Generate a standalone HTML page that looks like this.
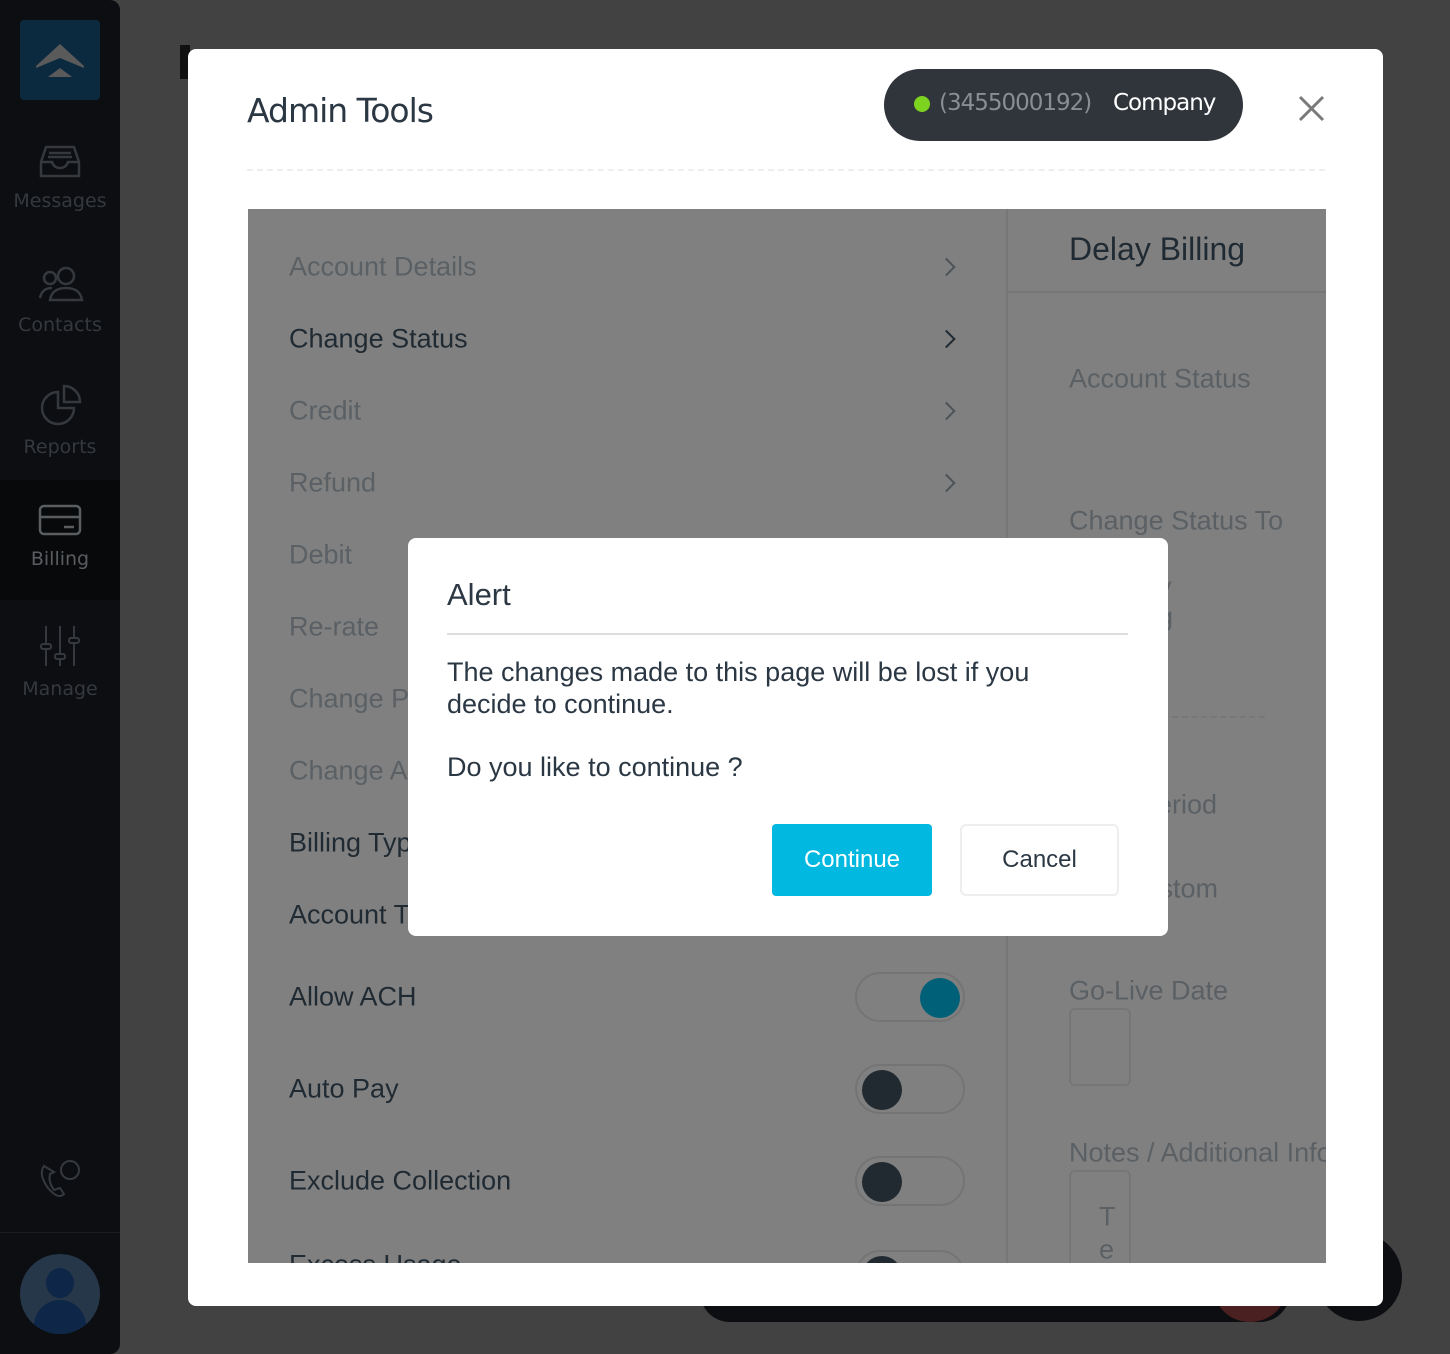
<!DOCTYPE html>
<html><head><style>
*{margin:0;padding:0;box-sizing:border-box}
body{width:1450px;height:1354px;background:#424242;position:relative;overflow:hidden;font-family:"Liberation Sans",Arial,sans-serif}
.abs{position:absolute}
.side{left:0;top:0;width:120px;height:1354px;background:#0c0e11;border-radius:0 10px 10px 0}
.nav{left:0;width:120px;text-align:center;color:#35393e;font-size:19px;font-family:"DejaVu Sans",sans-serif}
.modal{left:188px;top:49px;width:1195px;height:1257px;background:#fff;border-radius:8px}
.panel{left:248px;top:209px;width:1078px;height:1054px;background:#808080;overflow:hidden}
.it{position:absolute;left:41px;font-size:27px;color:#5b6065;transform:translateY(-50%);white-space:nowrap}
.dk{color:#1f2a33}
.chev{position:absolute;left:694px;width:13px;height:13px;border-right:2px solid #4e5357;border-top:2px solid #4e5357;transform:translateY(-50%) rotate(45deg)}
.tg{position:absolute;left:607px;width:110px;height:50px;border:2px solid #747474;border-radius:25px;transform:translateY(-50%)}
.kn{position:absolute;top:4px;width:40px;height:40px;border-radius:50%;background:#212a31}
.rt{position:absolute;left:821px;font-size:27px;color:#5b6065;transform:translateY(-50%);white-space:nowrap}
</style></head><body>
<div class="abs" style="left:700px;top:1288px;width:590px;height:34px;background:#0c0e11;border-radius:0 0 30px 30px"></div>
<div class="abs" style="left:1215px;top:1260px;width:70px;height:62px;background:#4a2020;border-radius:50%"></div>
<div class="abs" style="left:1316px;top:1233px;width:86px;height:88px;background:#0c0e11;border-radius:50%"></div>
<div class="abs" style="left:180px;top:45px;width:10px;height:34px;background:#111"></div>
<div class="abs side"></div>
<div class="abs" style="left:20px;top:20px;width:80px;height:80px;background:#0b2a40;border-radius:4px"></div>
<svg class="abs" style="left:34px;top:38px" width="52" height="42"><path d="M2 28 L26 6 L50 28 L50 30 L26 20 L2 30Z" fill="#5a5a5a"/><path d="M14 39 L26 30 L38 39Z" fill="#5a5a5a"/></svg>
<svg class="abs" style="left:38px;top:144px" width="44" height="36" fill="none" stroke="#35393e" stroke-width="2.5"><path d="M3 18 L8 3 H36 L41 18 V32 H3Z M3 18 H14 Q16 24 22 24 Q28 24 30 18 H41 M11 9 H33 M10 13 H34"/></svg>
<div class="abs nav" style="top:190px">Messages</div>
<svg class="abs" style="left:38px;top:266px" width="46" height="38" fill="none" stroke="#35393e" stroke-width="2.5"><circle cx="12" cy="12" r="6"/><circle cx="28" cy="10" r="8"/><path d="M2 32 Q4 22 14 22 M12 34 Q14 22 28 22 Q42 22 44 34Z"/></svg>
<div class="abs nav" style="top:314px">Contacts</div>
<svg class="abs" style="left:38px;top:384px" width="44" height="44" fill="none" stroke="#35393e" stroke-width="2.5"><path d="M20 8 A16 16 0 1 0 36 24 H20Z M26 2 A16 16 0 0 1 42 18 H26Z"/></svg>
<div class="abs nav" style="top:436px">Reports</div>
<div class="abs" style="left:0;top:480px;width:120px;height:120px;background:#08090b"></div>
<svg class="abs" style="left:38px;top:504px" width="44" height="34" fill="none" stroke="#5a5d60" stroke-width="2.5"><rect x="2" y="2" width="40" height="28" rx="4"/><path d="M2 13 H42 M26 23 H36" /></svg>
<div class="abs nav" style="top:548px;color:#5a5d60">Billing</div>
<svg class="abs" style="left:38px;top:624px" width="44" height="44" fill="none" stroke="#35393e" stroke-width="2"><path d="M8 2 V42 M22 2 V42 M36 2 V42"/><rect x="3" y="20" width="10" height="5" rx="2" fill="#0c0e11"/><rect x="17" y="30" width="10" height="5" rx="2" fill="#0c0e11"/><rect x="31" y="14" width="10" height="5" rx="2" fill="#0c0e11"/></svg>
<div class="abs nav" style="top:678px">Manage</div>
<svg class="abs" style="left:36px;top:1156px" width="48" height="44" fill="none" stroke="#35393e" stroke-width="2"><path d="M8 10 Q2 18 12 32 Q22 44 28 38 L24 32 L18 34 Q12 26 14 18 L18 16 Z"/><circle cx="34" cy="14" r="9"/></svg>
<div class="abs" style="left:0;top:1232px;width:120px;height:1px;background:#1a1d20"></div>
<div class="abs" style="left:20px;top:1254px;width:80px;height:80px;border-radius:50%;background:#27374a;overflow:hidden"><div class="abs" style="left:26px;top:14px;width:28px;height:30px;border-radius:50%;background:#0e2748"></div><div class="abs" style="left:14px;top:46px;width:52px;height:40px;border-radius:26px 26px 0 0;background:#0e2748"></div></div>

<div class="abs modal"></div>
<div class="abs" style="left:247px;top:91px;font-size:33px;color:#2b3844;font-family:'DejaVu Sans',sans-serif;letter-spacing:-1px">Admin Tools</div>
<div class="abs" style="left:884px;top:69px;width:359px;height:72px;background:#30343b;border-radius:36px"></div>
<div class="abs" style="left:914px;top:96px;width:16px;height:16px;border-radius:50%;background:#7ed321"></div>
<div class="abs" style="left:939px;top:90px;font-size:23px;color:#8a8d92;font-family:'DejaVu Sans',sans-serif;letter-spacing:-1px">(3455000192)</div>
<div class="abs" style="left:1113px;top:90px;font-size:23px;color:#fff;font-family:'DejaVu Sans',sans-serif;letter-spacing:-1px">Company</div>
<svg class="abs" style="left:1298px;top:95px" width="27" height="27" stroke="#7a7a7a" stroke-width="3"><path d="M2 2 L25 25 M25 2 L2 25"/></svg>
<div class="abs" style="left:247px;top:169px;width:1078px;border-top:2px dashed #eee"></div>

<div class="abs panel">
<div class="abs" style="left:758px;top:0;width:2px;height:1054px;background:#777"></div>
<div class="abs" style="left:760px;top:82px;width:318px;height:2px;background:#777"></div>
<div class="it" style="top:58px">Account Details</div><div class="chev" style="top:58px;left:692px"></div>
<div class="it dk" style="top:130px">Change Status</div><div class="chev" style="top:130px;left:692px;border-color:#1f2a33"></div>
<div class="it" style="top:202px">Credit</div><div class="chev" style="top:202px;left:692px"></div>
<div class="it" style="top:274px">Refund</div><div class="chev" style="top:274px;left:692px"></div>
<div class="it" style="top:346px">Debit</div>
<div class="it" style="top:418px">Re-rate</div>
<div class="it" style="top:490px">Change Plan</div>
<div class="it" style="top:562px">Change Account</div>
<div class="it dk" style="top:634px">Billing Type</div>
<div class="it dk" style="top:706px">Account Type</div>
<div class="it dk" style="top:788px">Allow ACH</div><div class="tg" style="top:788px"><div class="kn" style="left:63px;background:#006078"></div></div>
<div class="it dk" style="top:880px">Auto Pay</div><div class="tg" style="top:880px"><div class="kn" style="left:5px"></div></div>
<div class="it dk" style="top:972px">Exclude Collection</div><div class="tg" style="top:972px"><div class="kn" style="left:5px"></div></div>
<div class="it dk" style="top:1056px">Excess Usage</div><div class="tg" style="top:1066px"><div class="kn" style="left:5px"></div></div>
<div class="abs" style="left:821px;top:22px;font-size:32px;color:#1f2a33">Delay Billing</div>
<div class="rt" style="top:170px">Account Status</div>
<div class="rt" style="top:312px">Change Status To</div>
<div class="rt dk" style="top:378px;left:910px">y</div>
<div class="rt dk" style="top:408px;left:910px">g</div>
<div class="abs" style="left:905px;top:507px;width:112px;border-top:2px dashed #777"></div>
<div class="rt" style="top:596px;left:891px">Period</div>
<div class="rt dk" style="top:680px;left:877px">Custom</div>
<div class="rt" style="top:782px">Go-Live Date</div>
<div class="abs" style="left:821px;top:799px;width:62px;height:78px;border:2px solid #767676;border-radius:6px"></div>
<div class="rt" style="top:944px">Notes / Additional Info</div>
<div class="abs" style="left:821px;top:961px;width:62px;height:120px;border:2px solid #767676;border-radius:6px"></div>
<div class="rt dk" style="top:1008px;left:851px">T</div>
<div class="rt dk" style="top:1041px;left:851px">e</div>
</div>

<div class="abs" style="left:408px;top:538px;width:760px;height:398px;background:#fff;border-radius:8px"></div>
<div class="abs" style="left:447px;top:577px;font-size:31px;color:#2b3844">Alert</div>
<div class="abs" style="left:447px;top:633px;width:681px;height:2px;background:#ddd"></div>
<div class="abs" style="left:447px;top:656px;font-size:27px;line-height:32px;color:#2b3844">The changes made to this page will be lost if you<br>decide to continue.</div>
<div class="abs" style="left:447px;top:752px;font-size:27px;color:#2b3844">Do you like to continue ?</div>
<div class="abs" style="left:772px;top:824px;width:160px;height:72px;background:#00b8e0;border-radius:4px;color:#fff;font-size:24px;text-align:center;line-height:72px">Continue</div>
<div class="abs" style="left:960px;top:824px;width:159px;height:72px;border:2px solid #eee;border-radius:6px;color:#2b3844;font-size:24px;text-align:center;line-height:68px">Cancel</div>
</body></html>
